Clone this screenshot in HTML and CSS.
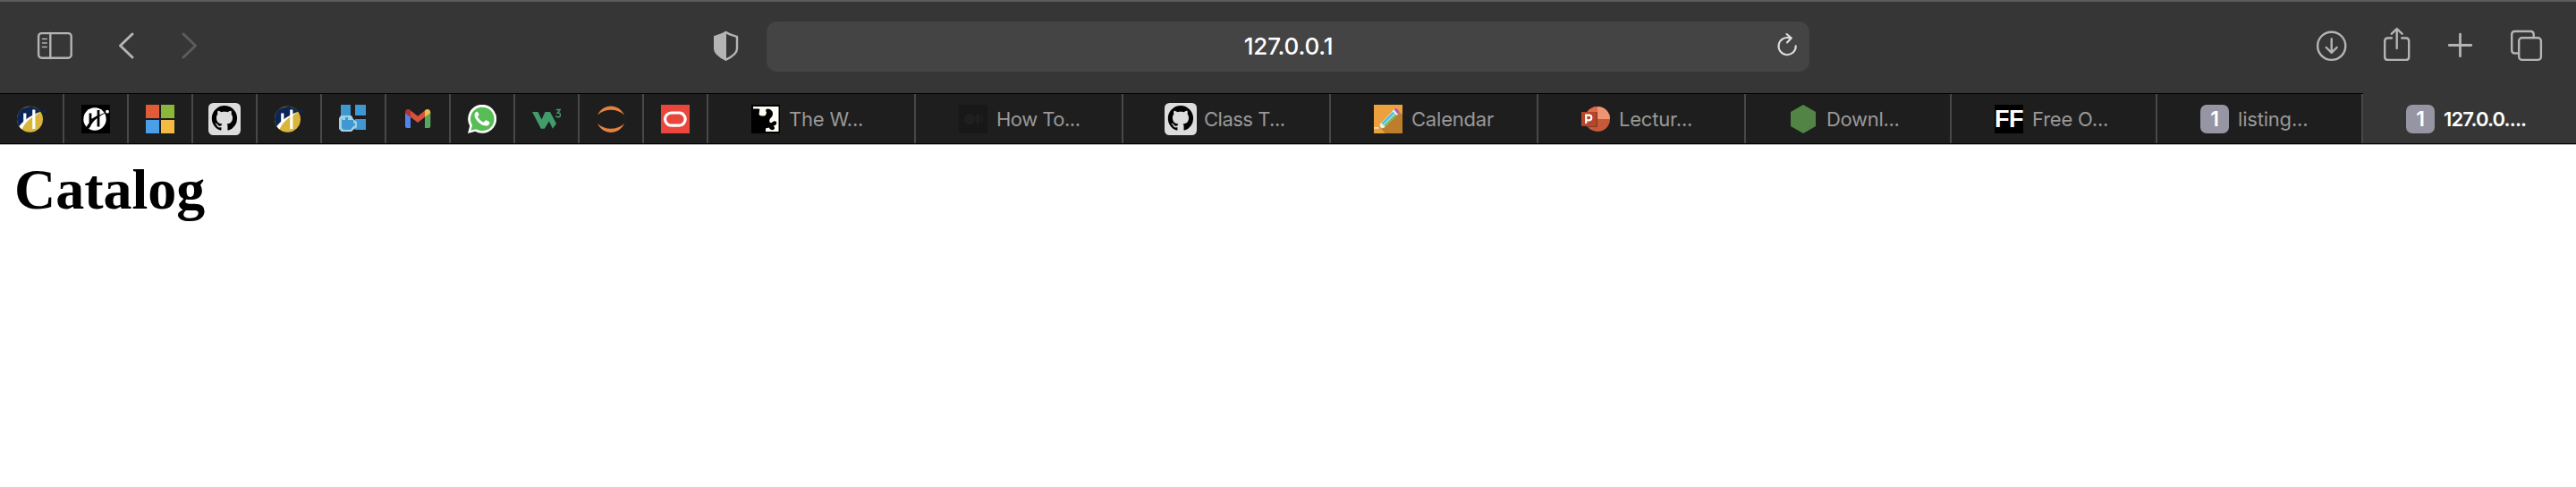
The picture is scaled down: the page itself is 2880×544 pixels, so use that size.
FILE: index.html
```html
<!DOCTYPE html>
<html lang="en">
<head>
<meta charset="utf-8">
<title>Catalog</title>
<link rel="stylesheet" href="styles.css">
</head>
<body>
<svg class="defs" width="0" height="0" aria-hidden="true">
  <symbol id="hlogo" viewBox="0 0 32 32">
    <circle cx="14.5" cy="16.3" r="14.5" fill="#d9b63b"/>
    <path d="M2.5 24.5A14.5 14.5 0 0 1 26.2 7.8C17 11 9 16 2.5 24.500Z" fill="#0c2558"/>
    <path d="M2.300 24.200C6 19 15 11.500 26.500 8.500C17 13 9 19 5.500 27.500Z" fill="#fff"/>
    <path d="M7.200 9.500h3.200V19l-3.200 3zM17.200 5.500h3.200v21.500h-3.200z" fill="#fff"/>
    <circle cx="30" cy="7.300" r="2" fill="#0c2558"/>
  </symbol>
  <symbol id="github" viewBox="0 0 36 36">
    <rect width="36" height="36" rx="5.500" fill="#ddd"/>
    <path transform="translate(3.800 3) scale(1.770)" fill="#000" d="M8 0C3.580 0 0 3.580 0 8c0 3.540 2.290 6.530 5.470 7.590.4.070.55-.17.55-.38 0-.19-.01-.82-.01-1.490-2.010.37-2.530-.49-2.690-.94-.09-.23-.48-.94-.82-1.130-.28-.15-.68-.52-.01-.53.63-.01 1.080.58 1.230.82.72 1.210 1.870.87 2.330.66.070-.52.28-.87.51-1.070-1.780-.2-3.640-.89-3.640-3.950 0-.87.31-1.590.82-2.150-.08-.2-.36-1.020.08-2.120 0 0 .67-.21 2.200.82.64-.18 1.320-.27 2-.27s1.360.09 2 .27c1.530-1.040 2.200-.82 2.200-.82.44 1.100.16 1.920.08 2.120.51.56.82 1.270.82 2.150 0 3.070-1.870 3.750-3.650 3.950.29.25.54.73.54 1.480 0 1.070-.01 1.930-.01 2.200 0 .21.15.46.55.38A8.010 8.010 0 0 0 16 8c0-4.420-3.580-8-8-8z"/>
  </symbol>
</svg>

<header class="toolbar">
  <div class="group nav">
    <svg class="tool" width="44" height="104" viewBox="40 0 44 104">
      <rect x="43.100" y="37.100" width="36.600" height="27.600" rx="3.500"/>
      <path d="M56.300 37v28"/><path class="thin" d="M47.500 43.500h4.700M47.500 48h4.700M47.500 52.500h4.700"/>
    </svg>
    <svg class="tool back" width="22" height="104" viewBox="130 0 22 104"><path d="M148 38L134.500 51L148 64"/></svg>
    <svg class="tool forward" width="22" height="104" viewBox="201 0 22 104"><path d="M205 38L218.500 51L205 64"/></svg>
  </div>
  <div class="group address">
    <svg class="tool shield" width="32" height="104" viewBox="796 0 32 104">
      <path d="M811.600 36C808 38.500 803.500 39.700 799.200 41V54.500C799.200 59.500 804 63 811.600 66.700C819.200 63 824 59.500 824 54.500V41C819.700 39.700 815.200 38.500 811.600 36Z"/>
      <path class="solid" d="M812 36C808 38.500 803.500 39.700 799 41V54.500C799 59.500 804 63 812 67Z"/>
    </svg>
    <div class="field">
      <span class="url">127.0.0.1</span>
      <svg class="tool reload" width="26" height="56" viewBox="1986 24 26 56"><path d="M2001 42.500A9.600 9.600 0 1 0 2007.700 51.300M1997.500 38L2002.800 42.500L1998 47.500"/></svg>
    </div>
  </div>
  <div class="group actions">
    <svg class="tool" width="36" height="104" viewBox="2588 0 36 104"><circle cx="2606.700" cy="51.300" r="15.600"/><path d="M2606.700 43.500V58.500M2600.700 53L2606.700 58.800L2612.700 53"/></svg>
    <svg class="tool" width="32" height="104" viewBox="2664 0 32 104"><path d="M2674 42.500H2669.700Q2666.200 42.500 2666.200 46V63.400Q2666.200 66.900 2669.700 66.900H2689.700Q2693.200 66.900 2693.200 63.400V46Q2693.200 42.500 2689.700 42.500H2685.300M2679.700 54V32.500M2673.700 37.800L2679.700 32.200L2685.700 37.800"/></svg>
    <svg class="tool plus" width="30" height="104" viewBox="2736 0 30 104"><path d="M2750.500 38.200V62.800M2738.200 50.500H2762.800"/></svg>
    <svg class="tool" width="38" height="104" viewBox="2806 0 38 104"><path d="M2815 59.500H2811.700Q2808.200 59.500 2808.200 56V38.500Q2808.200 35 2811.700 35H2829.200Q2832.700 35 2832.700 38.500V42"/><rect x="2816.200" y="42.200" width="24.700" height="24.700" rx="3.500"/></svg>
  </div>
</header>

<nav class="tabs">
  <div class="tab pinned"><svg class="icon"><use href="#hlogo"/></svg></div>
  <div class="tab pinned"><svg class="icon" viewBox="0 0 32 32"><rect width="32" height="32"/><circle cx="15" cy="16" r="12.700" fill="#fff"/><path d="M10 9.500v11M19 6v18.500" stroke="#000" stroke-width="2.800"/><path d="M5 26C9 18 17 11.500 28 8.500C20 13 13 17 10 24.500L8 27Z"/><path d="M11 17L19 12.500" stroke="#000" stroke-width="2"/><circle cx="29" cy="7.700" r="1.900" fill="#fff"/></svg></div>
  <div class="tab pinned"><svg class="icon" viewBox="0 0 32 32"><path fill="#e05c37" d="M0 0h15v15H0z"/><path fill="#8ab83a" d="M17 0h15v15H17z"/><path fill="#4a9fe8" d="M0 17h15v15H0z"/><path fill="#f4bb44" d="M17 17h15v15H17z"/></svg></div>
  <div class="tab pinned"><svg class="icon large"><use href="#github"/></svg></div>
  <div class="tab pinned"><svg class="icon"><use href="#hlogo"/></svg></div>
  <div class="tab pinned"><svg class="icon" viewBox="0 0 32 32"><path fill="#4098d2" d="M2 0h11v12H2zM18 0h12v12H18zM18 16h12v12H18z"/><path fill="#9fd0e6" d="M2 12h12l2 4 4 3v6l-4 3-2 2H3l-3-3V15z"/><path fill="#4098d2" d="M4 14h8v3h4v3l2 1v2l-3 2-2 3H5l-2-2v-8z"/><path fill="#9fd0e6" d="M4 14h3v3H4zM10 14h3v3h-3z"/></svg></div>
  <div class="tab pinned"><svg class="icon" viewBox="0 0 32 32"><path fill="#5084ed" d="M2 9l6 4.500V26H4q-2 0-2-2z"/><path fill="#58a55c" d="M24 13.500L30.300 9v15q0 2-2 2H24z"/><path fill="#d85140" d="M8 6.500l8.100 6.200L24 6.500v7.200L16.100 20L8 13.700z"/><path fill="#b3342a" d="M2 9C2 5 5.500 3.700 8 6.500v7.200L2 9.500z"/><path fill="#f3bd42" d="M24 6.500C27 3.500 30.300 5.500 30.300 9v.5L24 13.700z"/></svg></div>
  <div class="tab pinned"><svg class="icon" viewBox="0 0 32 32"><path fill="#fff" d="M0 32L2.200 23.700A16 16 0 1 1 8.300 29.800Z"/><path fill="#57bd55" d="M3.300 28.700L5 23A13.300 13.300 0 1 1 9.200 27.200Z"/><path fill="#fff" d="M11.400 8.500c-.6-1.200-2-.9-2.800 0C5.500 12 9.500 17.500 13 20.500c3.500 3 8.700 4.400 10.800 1.500.7-1 .9-2.500.2-2.900l-3.500-1.800c-1-.4-1.900 2.500-3 2.100-3-1.100-5-3.200-6.300-5.700-.4-.8 1.600-1.900 1.300-2.900z"/></svg></div>
  <div class="tab pinned"><svg class="icon" viewBox="0 0 32 32"><path fill="#429b6b" d="M0 8h6.500l4 8.500L14.500 8H20l7 13-4 5.700-4.200-8.200-5 8.200h-4z"/><path d="M26.700 5.500h4.600l-3 3.600q3.200-.2 3.200 2.300 0 2.400-2.500 2.400-1.700 0-2.600-1.300" fill="none" stroke="#429b6b" stroke-width="1.500"/></svg></div>
  <div class="tab pinned"><svg class="icon" viewBox="0 0 32 32"><path fill="#e6823c" d="M1 11.500C7-2 25-2 31 11.500C23 3.800 9 3.800 1 11.500ZM1 21C9 28.700 23 28.700 31 21C25 34.300 7 34.300 1 21Z"/></svg></div>
  <div class="tab pinned"><svg class="icon" viewBox="0 0 32 32"><rect width="32" height="32" fill="#ea463d"/><rect x="4.500" y="9" width="22.700" height="14.200" rx="7.100" fill="none" stroke="#fff" stroke-width="3.200"/></svg></div>

  <div class="tab wide"><svg class="icon" viewBox="0 0 32 32"><rect width="32" height="32"/><path fill="#fffcf2" d="M2 2h28.500v28H16v-3.500l3.500-1q2.500 4 6 2 1-2-.5-4 4-1 3-4.500-2-1.500-4 0-1.500 2-3.500.5-1-3 1.500-5 3-3 1.500-7-3-4-7-2.500-1 2 .5 3.500-.5 4-3 4-4 .5-5.500-1.500l.5-4q1-2-.5-2.500H2z"/></svg><span class="title tight-s">The W...</span></div>
  <div class="tab wide"><svg class="icon" viewBox="0 0 32 32"><rect width="32" height="32" fill="#181818"/><g fill="#1f1f1f"><circle cx="12" cy="16" r="6.200"/><ellipse cx="21" cy="16" rx="2.700" ry="6"/><ellipse cx="25.700" cy="16" rx="1" ry="5.300"/></g></svg><span class="title tight-l">How To...</span></div>
  <div class="tab wide"><svg class="icon large"><use href="#github"/></svg><span class="title tight-l">Class T...</span></div>
  <div class="tab wide"><svg class="icon" viewBox="0 0 32 32"><rect width="32" height="32" fill="#eca13c"/><path fill="#bd7d2c" d="M28 8l4 3v21H13l-5-5z"/><path fill="#f5d9ad" d="M0 25h8v1.800H0z"/><path fill="#eef1d8" d="M6 26.500L7 21.500 22.500 5.500l4.500 4.500L11 26z"/><path fill="#55b9ea" d="M8.500 20.500L22 7l2 2-13.500 13.500z"/><path fill="#5cc668" d="M11 23l13.700-13.500 1.500 1.500L12.500 24.500z"/><path fill="#e7eef2" d="M20.500 7l2-2 5 5-2 2z"/><path fill="#a85bc2" d="M22.500 5.200L24.300 4q2 0 4 4l-1.700 2.200z"/><path fill="#d98a36" d="M5.800 23.500L9 26.500l-3 .5z"/></svg><span class="title tight-s">Calendar</span></div>
  <div class="tab wide"><svg class="icon" viewBox="0 0 32 32"><circle cx="18" cy="16" r="14" fill="#c65a38"/><path fill="#ee9472" d="M18 2a14 14 0 0 1 14 14H18z"/><path fill="#dd6d4d" d="M18 2v14H4A14 14 0 0 1 18 2z"/><path fill="#8d3922" d="M6 8h12v17H6z"/><rect y="8" width="16.500" height="16" rx="1" fill="#b7472a"/><path d="M5.200 21V11.700H8.500a2.700 2.700 0 0 1 0 5.700H5.200" fill="none" stroke="#fff" stroke-width="2.200"/></svg><span class="title tight-s">Lectur...</span></div>
  <div class="tab mid"><svg class="icon" viewBox="0 0 32 32"><path fill="#528545" d="M16 0l14 8v16l-14 8L2 24V8z"/></svg><span class="title tight-m">Downl...</span></div>
  <div class="tab mid"><span class="icon ff">FF</span><span class="title tight-s">Free O...</span></div>
  <div class="tab mid"><span class="icon letter">1</span><span class="title tight-s">listing...</span></div>
  <div class="tab active"><span class="icon letter">1</span><span class="title">127.0.0....</span></div>
</nav>

<main class="page"><h1>Catalog</h1></main>
</body>
</html>
```
FILE: styles.css
```css
* { box-sizing: border-box; }
body { margin: 0; background: #fff; font-family: Inter, "Liberation Sans", sans-serif; }
.defs { display: block; height: 0; }

.toolbar { display: flex; height: 104px; padding: 0 36px 0 40px; background: #363636; box-shadow: inset 0 2px #5b5b5b; }
.group { display: flex; }
.tool { display: block; flex: none; fill: none; stroke: #b4b4b4; stroke-width: 2.4; stroke-linecap: round; stroke-linejoin: round; }
.thin { stroke-width: 1.6; }
.solid { fill: #b4b4b4; stroke: none; }
.nav { width: 756px; }
.back { margin-left: 46px; stroke-width: 3; }
.forward { margin-left: 49px; stroke: #5c5c5c; stroke-width: 3; }
.plus { stroke-width: 2.8; }
.address { gap: 29px; align-items: center; }
.field { display: flex; align-items: center; width: 1166px; height: 56px; padding-right: 11px; border-radius: 12px; background: #444; }
.url { flex: 1; padding-left: 38px; text-align: center; color: #fff; font-size: 26px; font-weight: 500; line-height: 54px; letter-spacing: -0.2px; }
.reload { stroke: #dedede; stroke-width: 2.1; }
.actions { flex: 1; justify-content: flex-end; gap: 40px; }

.tabs { display: flex; height: 58px; padding-top: 1px; background: #000; border-bottom: 1px solid #b9b9b9; }
.tab { display: flex; align-items: center; height: 55px; background: #1e1e1e; border-right: 2px solid #484848; }
.pinned { width: 72px; justify-content: center; }
.wide { width: 232px; padding-left: 48px; }
.mid { width: 230px; padding-left: 48px; }
.active { width: 238px; height: 56px; margin-top: -1px; padding: 1px 0 0 48px; border: 0; background: #363636; }
.icon { display: block; flex: none; width: 32px; height: 32px; }
.large { width: 36px; height: 36px; margin: 0 -2px; }
.title { margin-left: 10px; color: #999; font-size: 22px; line-height: 28px; white-space: nowrap; }
.tight-s { letter-spacing: -0.2px; }
.tight-m { letter-spacing: -0.3px; }
.tight-l { letter-spacing: -0.5px; }
.active .title { color: #fff; font-weight: 600; letter-spacing: -0.85px; }
.letter { border-radius: 7px; background: #9695a3; color: #fff; font-size: 23px; font-weight: 600; line-height: 32px; text-align: center; }
.ff { background: #000; color: #fff; font: bold 27px/32px "Liberation Sans", sans-serif; letter-spacing: -0.5px; text-align: center; }

.page { padding: 13px 16px 0; }
.page h1 { margin: 0; color: #000; font: bold 64px "Liberation Serif", serif; }
```
